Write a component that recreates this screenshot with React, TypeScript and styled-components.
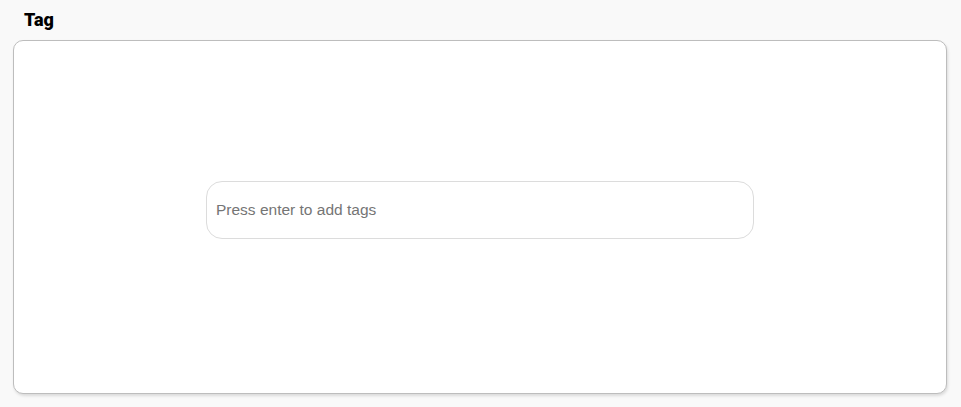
import React, { ReactElement, useState } from 'react'
import styled, { createGlobalStyle } from 'styled-components'

const GlobalStyle = createGlobalStyle`
  html, body {
    margin: 0;
    padding: 0;
    background: #f9f9f9;
  }
`

const Page = styled.div`
  padding: 8px 14px 12px 13px;
  display: flex;
  flex-direction: column;
`

const Title = styled.h3`
  margin: 0 0 9px 11px;
  font-family: Roboto, 'Liberation Sans', sans-serif;
  font-weight: 900;
  font-size: 18px;
  line-height: 23px;
  color: #000;
`

const Panel = styled.div`
  height: 354px;
  background: #fff;
  border: 1px solid #bdbdbd;
  border-radius: 10px;
  box-shadow: 1px 2px 3px rgba(0, 0, 0, 0.12);
  display: flex;
  align-items: center;
  justify-content: center;
  padding-bottom: 14px;
  box-sizing: border-box;
`

const TagInput = styled.input`
  width: 548px;
  height: 58px;
  box-sizing: border-box;
  border: 1px solid #dcdcdc;
  border-radius: 16px;
  padding: 0 9px;
  font-family: 'Liberation Sans', Arial, sans-serif;
  font-size: 15.5px;
  color: #333;
  outline: none;
  background: #fff;

  &::placeholder {
    color: #757575;
  }
`

const App: React.FC = (): ReactElement => {
  const [value, setValue] = useState('')

  return (
    <>
      <GlobalStyle />
      <Page>
        <Title>Tag</Title>
        <Panel>
          <TagInput
            type='text'
            placeholder='Press enter to add tags'
            value={value}
            onChange={(e: React.ChangeEvent<HTMLInputElement>) => setValue(e.target.value)}
          />
        </Panel>
      </Page>
    </>
  )
}

export default App
